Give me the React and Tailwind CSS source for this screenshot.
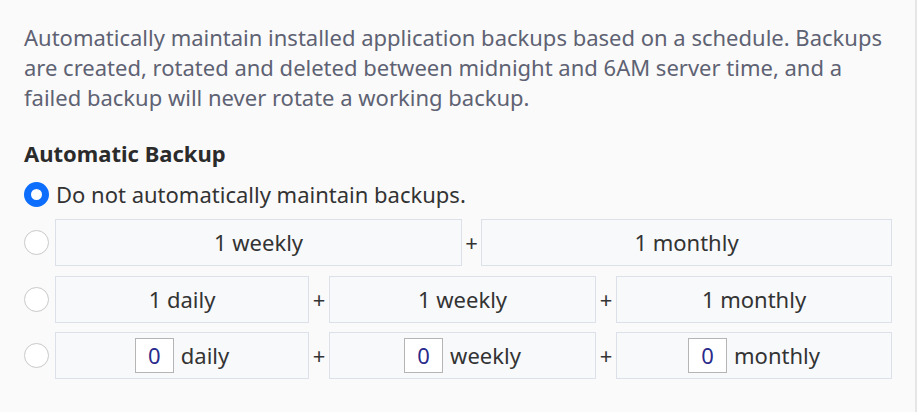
import React from "react";

const Box = ({ w, children }) => (
  <div
    className={`${w} h-[47px] shrink-0 flex items-center justify-center gap-[7px] border border-[#dce1e9] bg-[#f8f9fb] text-[22px] text-[#333333]`}
  >
    {children}
  </div>
);

const Plus = ({ w }) => (
  <div className={`${w} shrink-0 flex items-center justify-center text-[22px] text-[#333333]`}>+</div>
);

const Radio = ({ checked }) =>
  checked ? (
    <span className="block w-[25px] h-[25px] shrink-0 rounded-full border-[7px] border-[#0d6efd] bg-white" />
  ) : (
    <span className="block w-[25px] h-[25px] shrink-0 rounded-full border border-[#c9c9c9] bg-white" />
  );

const Num = ({ label }) => (
  <>
    <span className="w-[39px] h-[35px] flex items-center justify-center border border-[#b5b5b5] bg-white text-[#2a2a8c]">
      0
    </span>
    <span>{label}</span>
  </>
);

export default function App() {
  return (
    <div className="flex w-[920px] h-[412px] bg-white" style={{ fontFamily: '"Noto Sans", "Open Sans", sans-serif' }}>
      <div className="w-[917px] h-full bg-[#fafafa] border-r-2 border-[#e6e6e6] pt-[22px] pl-6">
        <p className="w-[870px] text-[22px] leading-[30px] text-[#5e6273]">
          Automatically maintain installed application backups based on a schedule. Backups are created, rotated and
          deleted between midnight and 6AM server time, and a failed backup will never rotate a working backup.
        </p>

        <h3 className="mt-[26px] text-[22px] leading-[30px] font-bold text-[#2b2b2b]">Automatic Backup</h3>

        <div className="mt-[11px] flex items-center gap-[7px] text-[22px] leading-[30px] text-[#333333]">
          <Radio checked />
          <span>Do not automatically maintain backups.</span>
        </div>

        <div className="mt-[10px] flex flex-col gap-[9.5px]">
          <div className="flex items-center">
            <Radio />
            <div className="ml-[6px] flex">
              <Box w="w-[407px]">1 weekly</Box>
              <Plus w="w-[19px]" />
              <Box w="w-[411px]">1 monthly</Box>
            </div>
          </div>
          <div className="flex items-center">
            <Radio />
            <div className="ml-[6px] flex">
              <Box w="w-[254px]">1 daily</Box>
              <Plus w="w-[20px]" />
              <Box w="w-[267px]">1 weekly</Box>
              <Plus w="w-[20px]" />
              <Box w="w-[276px]">1 monthly</Box>
            </div>
          </div>
          <div className="flex items-center">
            <Radio />
            <div className="ml-[6px] flex">
              <Box w="w-[254px]">
                <Num label="daily" />
              </Box>
              <Plus w="w-[20px]" />
              <Box w="w-[267px]">
                <Num label="weekly" />
              </Box>
              <Plus w="w-[20px]" />
              <Box w="w-[276px]">
                <Num label="monthly" />
              </Box>
            </div>
          </div>
        </div>
      </div>
    </div>
  );
}
